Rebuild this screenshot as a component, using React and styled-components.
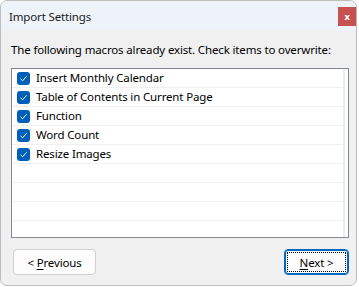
import React from "react";
import styled, { createGlobalStyle } from "styled-components";

const Global = createGlobalStyle`
  html, body { margin: 0; padding: 0; background: #ffffff; }
  body { font-family: "Noto Sans", "Open Sans", sans-serif; font-size: 11.5px; letter-spacing: -0.15px; color: #000; }
`;

const Window = styled.div`
  width: 355px;
  height: 284px;
  border: 1px solid #bdbdbd;
  border-radius: 7px;
  overflow: hidden;
  background: #f0f0f0;
  display: flex;
  flex-direction: column;
`;

const TitleBar = styled.div`
  height: 30px;
  background: #eef2f9;
  display: flex;
  align-items: flex-start;
  justify-content: space-between;
`;

const Title = styled.span`
  padding: 8px 0 0 8px;
  font-size: 11.5px;
  line-height: 16px;
  color: #1a1a1a;
`;

const Close = styled.div`
  margin-top: 6px;
  width: 18px;
  height: 19px;
  background: #c75050;
  color: #fff;
  font-family: "DejaVu Sans", sans-serif;
  font-weight: bold;
  font-size: 9px;
  display: flex;
  align-items: center;
  justify-content: center;
`;

const Body = styled.div`
  flex: 1;
  display: flex;
  flex-direction: column;
  padding: 11px 7px 0 10px;
`;

const Label = styled.div`
  line-height: 16px;
  white-space: nowrap;
`;

const ListBox = styled.div`
  margin-top: 10px;
  height: 168px;
  border: 1px solid #828790;
  background: #fff;
  overflow: hidden;
`;

const Rows = styled.div`
  width: 331px;
  border-right: 2px solid #e9edf4;
  height: 100%;
`;

const Row = styled.div`
  height: 18px;
  border-bottom: 1px solid #f0f0f0;
  display: flex;
  align-items: center;
  padding-left: 5px;
  gap: 6px;
`;

const Check = styled.span`
  width: 13px;
  height: 13px;
  border-radius: 3px;
  background: #005fb8;
  display: flex;
  align-items: center;
  justify-content: center;
`;

const RowText = styled.span`
  line-height: 16px;
  white-space: nowrap;
`;

const Footer = styled.div`
  display: flex;
  justify-content: space-between;
  margin-top: 11px;
  padding-left: 2px;
`;

const Button = styled.button`
  font-family: inherit;
  font-size: 11.5px;
  letter-spacing: -0.15px;
  color: #000;
  width: ${(p) => p.$w}px;
  height: 26px;
  background: #fdfdfd;
  border: 1px solid ${(p) => (p.$focused ? "#0067c0" : "#d0d0d0")};
  box-shadow: ${(p) => (p.$focused ? "inset 0 0 0 1px #0067c0" : "none")};
  border-radius: 4px;
  padding: 0;
  position: relative;
  display: flex;
  align-items: center;
  justify-content: center;
  ${(p) =>
    p.$focused &&
    `&::after { content: ""; position: absolute; inset: 2px; border: 1px dotted #000; border-radius: 1px; }`}
`;

const U = styled.span`
  text-decoration: underline;
  text-underline-offset: 2px;
`;

const CheckIcon = () => (
  <svg width="9" height="9" viewBox="0 0 9 9">
    <path d="M1.5 4.8 L3.6 6.8 L7.6 2.3" fill="none" stroke="#fff" strokeWidth="1" />
  </svg>
);

const items = [
  "Insert Monthly Calendar",
  "Table of Contents in Current Page",
  "Function",
  "Word Count",
  "Resize Images",
  "",
  "",
  "",
  "",
];

export default function App() {
  return (
    <>
      <Global />
      <Window>
        <TitleBar>
          <Title>Import Settings</Title>
          <Close>x</Close>
        </TitleBar>
        <Body>
          <Label>The following macros already exist. Check items to overwrite:</Label>
          <ListBox>
            <Rows>
              {items.map((t, i) => (
                <Row key={i}>
                  {t && (
                    <>
                      <Check>
                        <CheckIcon />
                      </Check>
                      <RowText>{t}</RowText>
                    </>
                  )}
                </Row>
              ))}
            </Rows>
          </ListBox>
          <Footer>
            <Button $w={83}>
              &lt;&nbsp;<U>P</U>revious
            </Button>
            <Button $w={65} $focused>
              <U>N</U>ext &gt;
            </Button>
          </Footer>
        </Body>
      </Window>
    </>
  );
}
